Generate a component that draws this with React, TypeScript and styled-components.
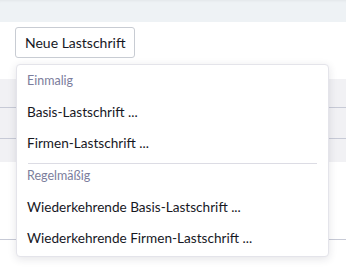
import React from "react";
import styled, { createGlobalStyle } from "styled-components";

const GlobalStyle = createGlobalStyle`
  html, body {
    margin: 0;
    padding: 0;
    background: #ffffff;
    font-family: "Lato", "Open Sans", sans-serif;
  }
`;

const Page = styled.div`
  position: relative;
  width: 346px;
  height: 267px;
  overflow: hidden;
  background: #ffffff;
`;

const TopBand = styled.div`
  height: 22px;
  background: #eef2f5;
  box-shadow: inset 0 3px 3px -2px rgba(0, 0, 0, 0.05);
`;

const Toolbar = styled.div`
  display: flex;
  padding: 5px 15px 0;
`;

const Button = styled.button`
  height: 31px;
  padding: 0 9px;
  background: #ffffff;
  border: 1px solid #c8ccd3;
  border-radius: 3px;
  font-family: "Lato", sans-serif;
  font-size: 14px;
  color: #17181f;
  cursor: pointer;
`;

const Table = styled.div`
  margin-top: 21px;
`;

const Row = styled.div<{ $shaded?: boolean; $height: number; $line?: boolean }>`
  height: ${(p) => p.$height}px;
  background: ${(p) => (p.$shaded ? "#f1f1f4" : "#ffffff")};
  border-bottom: ${(p) => (p.$line ? "1px solid #c7cad6" : "none")};
`;

const Menu = styled.div`
  position: absolute;
  left: 16px;
  top: 64px;
  width: 313px;
  box-sizing: border-box;
  padding: 4px 0 3px;
  background: #ffffff;
  border: 1px solid #e4e4ea;
  border-radius: 4px;
  box-shadow: 0 2px 8px rgba(30, 30, 60, 0.12);
`;

const GroupLabel = styled.div`
  padding: 4px 10px 7px;
  line-height: 16px;
  font-size: 12.5px;
  color: #7b7d9c;
`;

const Item = styled.div`
  height: 31px;
  display: flex;
  align-items: center;
  padding: 0 10px;
  font-size: 13.6px;
  color: #17181f;
  cursor: pointer;
`;

const Separator = styled.div`
  height: 1px;
  margin: 5px 11px 0;
  background: #dcdce4;
`;

export default function App() {
  return (
    <Page>
      <GlobalStyle />
      <TopBand />
      <Toolbar>
        <Button>Neue Lastschrift</Button>
      </Toolbar>
      <Table>
        <Row $shaded $height={28} $line />
        <Row $shaded $height={30} $line />
        <Row $shaded $height={23} />
        <Row $height={77} $line />
      </Table>
      <Menu>
        <GroupLabel>Einmalig</GroupLabel>
        <Item>Basis-Lastschrift ...</Item>
        <Item>Firmen-Lastschrift ...</Item>
        <Separator />
        <GroupLabel>Regelmäßig</GroupLabel>
        <Item>Wiederkehrende Basis-Lastschrift ...</Item>
        <Item>Wiederkehrende Firmen-Lastschrift ...</Item>
      </Menu>
    </Page>
  );
}
